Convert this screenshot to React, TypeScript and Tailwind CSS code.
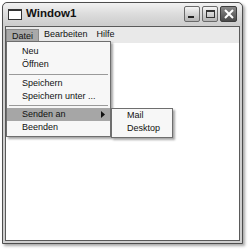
import React from "react";

const font = { fontFamily: '"Liberation Sans", Arial, sans-serif' };

function Row({ children, active, arrow }: { children: React.ReactNode; active?: boolean; arrow?: boolean }) {
  return (
    <div
      className={
        "relative h-[13px] leading-[13px] pl-[15px] pr-[6px] text-[9px] text-[#111] " +
        (active ? "bg-[#a6a6a6]" : "")
      }
    >
      {children}
      {arrow && (
        <svg className="absolute right-[5px] top-[3px]" width="4" height="7" viewBox="0 0 4 7">
          <path d="M0 0 L4 3.5 L0 7 Z" fill="#111" />
        </svg>
      )}
    </div>
  );
}

function Sep({ h }: { h: number }) {
  return (
    <div className={"flex items-center px-[2px] " + (h === 6 ? "h-[6px]" : "h-[5px]")}>
      <div className="h-px w-full bg-[#9a9a9a]" />
    </div>
  );
}

export default function App() {
  return (
    <div className="relative w-[252px] h-[250px] bg-white" style={font}>
      <div className="absolute left-[2px] top-[2px] w-[241px] h-[242px] flex flex-col border border-[#4e4e4e] rounded-t-[5px] bg-[#cfcfcf] shadow-[2px_2px_3px_rgba(0,0,0,0.35)]">
        {/* Title bar */}
        <div className="h-[22px] flex items-center rounded-t-[5px] bg-gradient-to-b from-[#f2f2f2] via-[#dcdcdc] to-[#cdcdcd] px-[4px]">
          <div className="w-[14px] h-[11px] ml-[1px] border border-[#333] border-t-2 bg-white" />
          <span className="ml-[4px] text-[11.5px] font-bold text-[#111]">Window1</span>
          <div className="ml-auto flex items-center gap-[2px] mr-[1px]">
            <div className="relative w-[16px] h-[16px] rounded-[2px] border border-[#6a6a6a] bg-gradient-to-b from-[#f4f4f4] to-[#b4b4b4]">
              <div className="absolute left-[3px] bottom-[3px] w-[6px] h-[2px] bg-[#222]" />
            </div>
            <div className="relative w-[16px] h-[16px] rounded-[2px] border border-[#6a6a6a] bg-gradient-to-b from-[#f4f4f4] to-[#b4b4b4]">
              <div className="absolute left-[3px] top-[3px] w-[9px] h-[8px] border border-[#333] border-t-2" />
            </div>
            <div className="relative w-[17px] h-[16px] rounded-[2px] border border-[#3e3e3e] bg-gradient-to-b from-[#8a8a8a] to-[#4a4a4a] flex items-center justify-center">
              <svg width="10" height="10" viewBox="0 0 10 10">
                <path d="M1 1 L9 9 M9 1 L1 9" stroke="#fff" strokeWidth="2" />
              </svg>
            </div>
          </div>
        </div>
        {/* Client area */}
        <div className="flex-1 mx-[2px] mb-[2px] mt-[1px] border border-[#5a5a5a] bg-white flex flex-col">
          <div className="h-[16px] bg-[#e9e9e9] flex items-center text-[9px] text-[#111]">
            <div className="h-[13px] leading-[12px] px-[5px] bg-[#a9a9a9] border border-[#8a8a8a]">Datei</div>
            <div className="px-[5px]">Bearbeiten</div>
            <div className="px-[4px]">Hilfe</div>
          </div>
          <div className="flex-1" />
        </div>
      </div>

      {/* Dropdown menu */}
      <div className="absolute left-[6px] top-[41px] w-[105px] pt-[3px] pb-[2px] border border-[#6e6e6e] bg-[#f7f7f7] shadow-[2px_2px_2px_rgba(0,0,0,0.35)]">
        <Row>Neu</Row>
        <Row>Öffnen</Row>
        <Sep h={6} />
        <Row>Speichern</Row>
        <Row>Speichern unter ...</Row>
        <Sep h={5} />
        <Row active arrow>Senden an</Row>
        <Row>Beenden</Row>
      </div>

      {/* Submenu */}
      <div className="absolute left-[111px] top-[108px] w-[62px] pb-[2px] border border-[#6e6e6e] bg-[#f7f7f7] shadow-[2px_2px_2px_rgba(0,0,0,0.35)]">
        <Row>Mail</Row>
        <Row>Desktop</Row>
      </div>
    </div>
  );
}
